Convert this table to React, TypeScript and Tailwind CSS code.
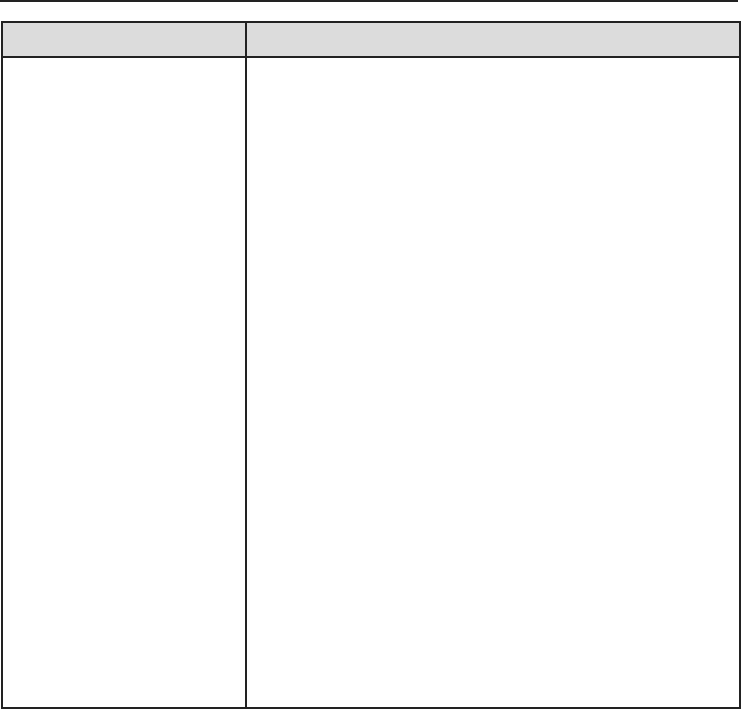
// Empty two-column table with a gray header row

export default function App() {
  return (
    <div className="w-[741px] h-[709px] bg-white overflow-hidden">
      {/* Top rule */}
      <div className="h-[2px] w-[738px] bg-[#222]" />

      {/* Table */}
      <div className="mt-[19px] ml-[1px] w-[740px] h-[688px] border-2 border-[#222] grid grid-cols-[244px_1fr] grid-rows-[35px_1fr]">
        <div className="bg-[#dcdcdc] border-r-2 border-b-2 border-[#222]" />
        <div className="bg-[#dcdcdc] border-b-2 border-[#222]" />
        <div className="border-r-2 border-[#222]" />
        <div />
      </div>
    </div>
  );
}
